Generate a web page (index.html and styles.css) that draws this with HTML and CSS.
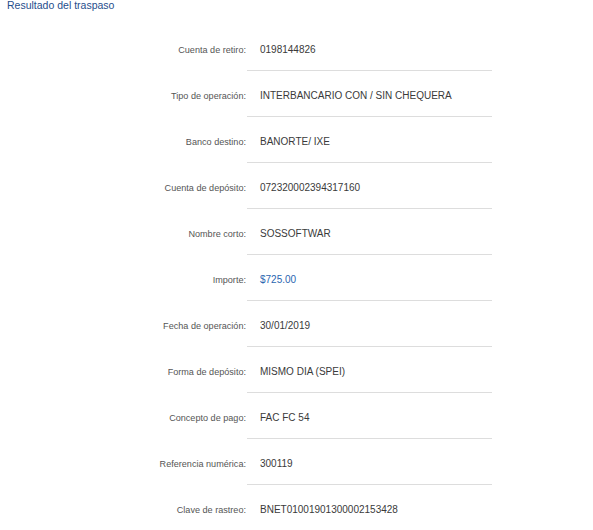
FILE: index.html
```html
<!DOCTYPE html>
<html lang="es">
<head>
<meta charset="utf-8">
<title>Resultado del traspaso</title>
<link rel="stylesheet" href="styles.css">
</head>
<body>
<h1 class="title">Resultado del traspaso</h1>
<dl class="details">
  <div class="row"><dt class="label">Cuenta de retiro:</dt><dd class="value">0198144826</dd></div>
  <div class="row"><dt class="label">Tipo de operación:</dt><dd class="value">INTERBANCARIO CON / SIN CHEQUERA</dd></div>
  <div class="row"><dt class="label">Banco destino:</dt><dd class="value">BANORTE/ IXE</dd></div>
  <div class="row"><dt class="label">Cuenta de depósito:</dt><dd class="value">072320002394317160</dd></div>
  <div class="row"><dt class="label">Nombre corto:</dt><dd class="value">SOSSOFTWAR</dd></div>
  <div class="row"><dt class="label">Importe:</dt><dd class="value amount">$725.00</dd></div>
  <div class="row"><dt class="label">Fecha de operación:</dt><dd class="value">30/01/2019</dd></div>
  <div class="row"><dt class="label">Forma de depósito:</dt><dd class="value">MISMO DIA (SPEI)</dd></div>
  <div class="row"><dt class="label">Concepto de pago:</dt><dd class="value">FAC FC 54</dd></div>
  <div class="row"><dt class="label">Referencia numérica:</dt><dd class="value">300119</dd></div>
  <div class="row"><dt class="label">Clave de rastreo:</dt><dd class="value">BNET01001901300002153428</dd></div>
</dl>
</body>
</html>
```
FILE: styles.css
```css
html, body {
  margin: 0;
  padding: 0;
  background: #ffffff;
}
body {
  font-family: "Liberation Sans", Arial, sans-serif;
  font-size: 10px;
  color: #333333;
}
.title {
  margin: 0;
  padding: 0 0 0 7px;
  height: 25px;
  font-size: 10.5px;
  font-weight: normal;
  line-height: 10px;
  color: #1f4e8c;
}
.details {
  margin: 0;
  padding: 0;
}
.row {
  display: flex;
  align-items: baseline;
}
.label {
  width: 246px;
  box-sizing: border-box;
  padding-top: 19px;
  text-align: right;
  font-size: 9.1px;
  line-height: 12px;
  color: #555555;
}
.value {
  margin: 0 0 0 1px;
  width: 245px;
  box-sizing: border-box;
  padding: 19px 0 14px 13px;
  line-height: 12px;
  border-bottom: 1px solid #dddddd;
  color: #3a3a3a;
}
.amount {
  color: #2a66b0;
}
```
